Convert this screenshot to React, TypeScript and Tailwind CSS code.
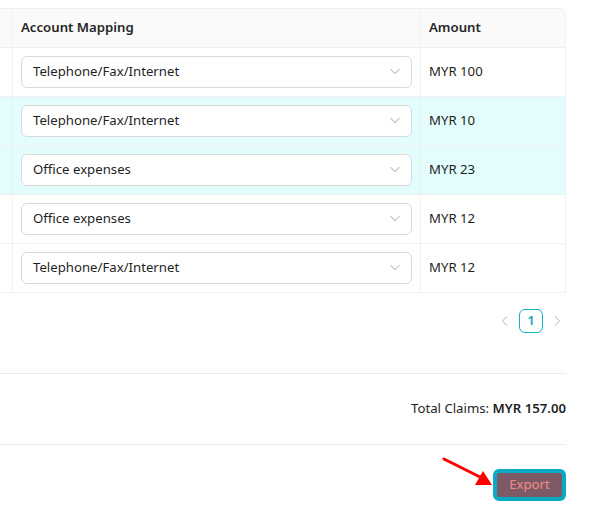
import React from "react";

const rows = [
  { account: "Telephone/Fax/Internet", amount: "MYR 100", active: false },
  { account: "Telephone/Fax/Internet", amount: "MYR 10", active: true },
  { account: "Office expenses", amount: "MYR 23", active: true },
  { account: "Office expenses", amount: "MYR 12", active: false },
  { account: "Telephone/Fax/Internet", amount: "MYR 12", active: false },
];

function Chevron({ dir = "down", className = "" }: { dir?: "down" | "left" | "right"; className?: string }) {
  const d =
    dir === "down" ? "M2 4l5 5 5-5" : dir === "left" ? "M9 2L4 7l5 5" : "M5 2l5 5-5 5";
  return (
    <svg viewBox="0 0 14 14" className={className} fill="none" stroke="currentColor" strokeWidth="1.2">
      <path d={d} strokeLinecap="round" strokeLinejoin="round" />
    </svg>
  );
}

function AccountSelect({ value }: { value: string }) {
  return (
    <div className="flex h-[32px] items-center justify-between rounded-md border border-[#d9d9d9] bg-white pl-[11px] pr-[10px]">
      <span className="text-[13.2px] text-[#1f1f1f]">{value}</span>
      <Chevron className="h-[12px] w-[12px] text-[#bfbfbf]" />
    </div>
  );
}

export default function App() {
  return (
    <div className="relative h-[523px] w-[607px] overflow-hidden bg-white font-['Noto_Sans',sans-serif] text-[13.2px] text-[#1f1f1f]">
      <div className="w-[566px] pt-2">
        {/* table */}
        <div className="overflow-hidden rounded-tr-lg border-t border-r border-[#f0f0f0]">
          <div className="flex h-[39px] border-b border-[#f0f0f0] bg-[#fafafa]">
            <div className="w-[13px] border-r border-[#f0f0f0]" />
            <div className="flex w-[408px] items-center border-r border-[#f0f0f0] pl-2 font-semibold text-[#262626]">
              Account Mapping
            </div>
            <div className="flex flex-1 items-center pl-2 font-semibold text-[#262626]">Amount</div>
          </div>
          {rows.map((r, i) => (
            <div
              key={i}
              className={`flex h-[49px] border-b border-[#f0f0f0] ${r.active ? "bg-[#e3fdfd]" : "bg-white"}`}
            >
              <div className="w-[13px] border-r border-[#f0f0f0]" />
              <div className="flex w-[408px] flex-col justify-center border-r border-[#f0f0f0] px-2">
                <AccountSelect value={r.account} />
              </div>
              <div className="flex flex-1 items-center pl-2">{r.amount}</div>
            </div>
          ))}
        </div>

        {/* pagination */}
        <div className="mt-4 flex items-center justify-end gap-2 pr-[3px]">
          <Chevron dir="left" className="h-[12px] w-[12px] text-[#c8c8c8]" />
          <div className="flex h-[24px] w-[24px] items-center justify-center rounded-md border border-[#13b3c6] text-[13.2px] font-semibold text-[#13a8bd]">
            1
          </div>
          <Chevron dir="right" className="h-[12px] w-[12px] text-[#c8c8c8]" />
        </div>

        {/* total */}
        <div className="mt-[40px] border-t border-[#ececec]">
          <div className="flex h-[70px] items-center justify-end">
            <span>Total Claims:&nbsp;</span>
            <span className="font-semibold">MYR 157.00</span>
          </div>
        </div>

        {/* footer */}
        <div className="border-t border-[#ececec] pt-6">
          <div className="flex justify-end">
            <button className="flex h-[32px] w-[73px] items-center justify-center rounded-md border-[4px] border-[#0aaac4] bg-[#7d5a66] text-[13.2px] text-[#f48a86]">
              Export
            </button>
          </div>
        </div>
      </div>

      {/* annotation arrow */}
      <svg className="absolute left-[440px] top-[455px]" width="56" height="36" viewBox="0 0 56 36">
        <line x1="4" y1="4" x2="42" y2="23" stroke="#ff0000" strokeWidth="3" strokeLinecap="round" />
        <polygon points="52,30 35,30 43,16" fill="#ff0000" />
      </svg>
    </div>
  );
}
